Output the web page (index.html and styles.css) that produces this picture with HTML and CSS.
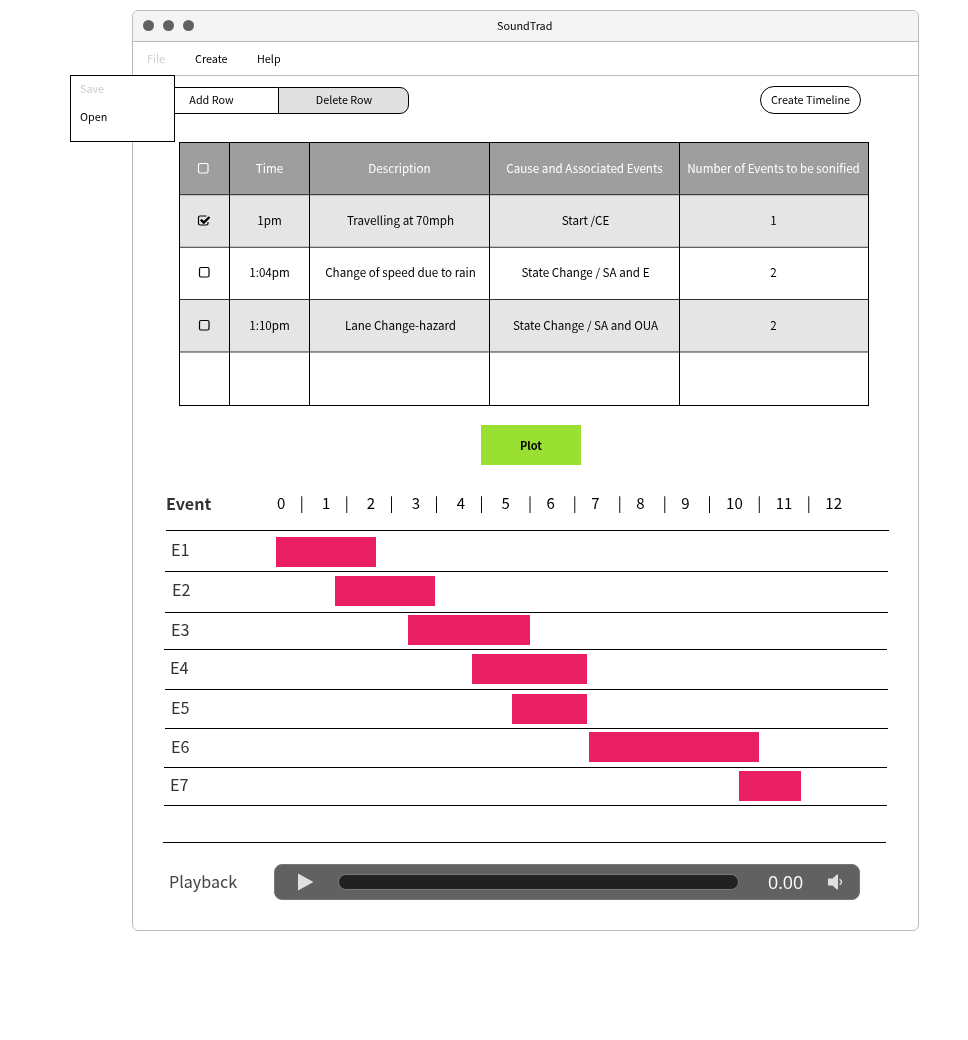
FILE: index.html
```html
<!DOCTYPE html>
<html lang="en">
<head>
<meta charset="utf-8">
<title>SoundTrad</title>
<link rel="stylesheet" href="styles.css">
</head>
<body>
<main class="window">
  <header class="titlebar">
    <span class="dot"></span><span class="dot"></span><span class="dot"></span>
    <h1 class="title">SoundTrad</h1>
  </header>
  <nav class="menubar">
    <span class="menu menu-file">File</span>
    <span class="menu menu-create">Create</span>
    <span class="menu">Help</span>
  </nav>
  <div class="dropdown">
    <div class="option disabled">Save</div>
    <div class="option">Open</div>
  </div>
  <section class="toolbar">
    <div class="group">
      <button class="seg seg-add">Add Row</button>
      <button class="seg seg-delete">Delete Row</button>
    </div>
    <button class="create">Create Timeline</button>
  </section>
  <section class="table">
    <div class="row head">
      <div class="cell pick"><svg class="check" viewBox="0 0 14 14"><rect x="1.5" y="1.5" width="9.500" height="9.500" rx="1.5"/></svg></div>
      <div class="cell">Time</div><div class="cell">Description</div><div class="cell cause">Cause and Associated Events</div><div class="cell count">Number of Events to be sonified</div>
    </div>
    <div class="row r1 shaded">
      <div class="cell pick"><svg class="check" viewBox="0 0 14 14"><path d="M11 8v1.500q0 1.500-1.500 1.500H3q-1.500 0-1.500-1.500V3.500Q1.500 2 3 2h6.500"/><path class="tick" d="M3.800 5.600l3 3L12.500 3"/></svg></div>
      <div class="cell">1pm</div><div class="cell desc">Travelling at 70mph</div><div class="cell cause">Start /CE</div><div class="cell count">1</div>
    </div>
    <div class="row r2">
      <div class="cell pick box"><svg class="check" viewBox="0 0 14 14"><rect x="1.5" y="1.5" width="9.500" height="9.500" rx="1.5"/></svg></div>
      <div class="cell">1:04pm</div><div class="cell desc">Change of speed due to rain</div><div class="cell cause">State Change / SA and E</div><div class="cell count">2</div>
    </div>
    <div class="row r3 shaded">
      <div class="cell pick box"><svg class="check" viewBox="0 0 14 14"><rect x="1.5" y="1.5" width="9.500" height="9.500" rx="1.5"/></svg></div>
      <div class="cell">1:10pm</div><div class="cell desc">Lane Change-hazard</div><div class="cell cause">State Change / SA and OUA</div><div class="cell count">2</div>
    </div>
    <div class="row r4"><div class="cell"></div><div class="cell"></div><div class="cell"></div><div class="cell"></div><div class="cell"></div></div>
  </section>
  <button class="plot">Plot</button>
  <section class="timeline">
    <div class="scale">
      <h2 class="scale-title">Event</h2>
      <div class="ticks">0    |     1    |     2    |     3    |     4    |     5     |    6     |    7     |    8     |    9     |    10    |    11    |    12</div>
    </div>
    <div class="lane e1"><span class="name">E1</span><span class="bar"></span></div>
    <div class="lane e2"><span class="name">E2</span><span class="bar"></span></div>
    <div class="lane e3"><span class="name">E3</span><span class="bar"></span></div>
    <div class="lane e4"><span class="name">E4</span><span class="bar"></span></div>
    <div class="lane e5"><span class="name">E5</span><span class="bar"></span></div>
    <div class="lane e6"><span class="name">E6</span><span class="bar"></span></div>
    <div class="lane e7"><span class="name">E7</span><span class="bar"></span></div>
    <div class="lane e8"></div>
  </section>
  <section class="playback">
    <span class="play-label">Playback</span>
    <div class="player">
      <svg class="play" viewBox="0 0 16 18"><path d="M0 .5v17L15.500 9z"/></svg>
      <div class="track"></div>
      <span class="time">0.00</span>
      <svg class="speaker" viewBox="0 0 16 16"><path d="M0 4.500h4.500L9 .5h1v15H9L4.500 11.500H0z"/><path class="wave" d="M11.500 5.500q2 .5 2 2.500t-2 2.500"/></svg>
    </div>
  </section>
</main>
</body>
</html>
```
FILE: styles.css
```css
* { box-sizing: border-box; }
body {
  margin: 0;
  padding: 10px 0 0 132px;
  background: #fff;
  color: #000;
  font-family: "Noto Sans CJK SC", sans-serif;
  font-size: 10.8px;
  line-height: 16px;
}
button { font: inherit; color: inherit; padding: 0 0 2px; margin: 0; border: 1px solid #000; background: #fff; }
h1, h2 { margin: 0; }

.window {
  position: relative;
  width: 787px;
  height: 921px;
  border: 1px solid #bbb;
  border-radius: 6px;
  will-change: transform;
}
.titlebar {
  display: flex;
  align-items: center;
  height: 31px;
  padding: 0 0 2px 10px;
  gap: 9px;
  background: #f4f4f4;
  border-bottom: 1px solid #bbb;
  border-radius: 5px 5px 0 0;
}
.dot { width: 11px; height: 11px; border-radius: 50%; background: #616161; }
.title { margin-left: 294px; font-size: 10.8px; font-weight: 400; }
.menubar {
  display: flex;
  align-items: center;
  height: 34px;
  padding: 0 0 2px 14px;
  border-bottom: 1px solid #bbb;
}
.menu-file { width: 48px; color: #ccc; }
.menu-create { width: 62px; }

.dropdown {
  position: absolute;
  left: -63px;
  top: 64px;
  width: 105px;
  height: 67px;
  padding: 4px 9px;
  border: 1px solid #000;
  background: #fff;
}
.option { height: 28px; }
.disabled { color: #ccc; }

.toolbar { display: flex; justify-content: space-between; align-items: center; height: 28px; margin: 10px 57px 0 10px; }
.group { display: flex; height: 27px; }
.seg { width: 135px; border-radius: 9px 0 0 9px; }
.seg-add { padding-left: 1px; border-right: 0; }
.seg-delete { width: 131px; padding-left: 1px; border-radius: 0 9px 9px 0; background: #e0e0e0; }
.create { width: 101px; height: 28px; border-radius: 14px; }

.table { width: 690px; height: 264px; margin: 28px 0 0 46px; border: 1px solid #000; border-left: 0; font-size: 11.65px; }
.row { display: grid; grid-template-columns: 50px 80px 180px 190px 189px; height: 52px; }
.head { height: 51px; background: #9e9e9e; color: #fff; }
.cell { display: flex; align-items: center; justify-content: center; padding-bottom: 2px; border-left: 1px solid #000; white-space: nowrap; }
.shaded { background: #e5e5e5; }
.r1 { height: 53px; background-image: linear-gradient(#404040 1px, #c0c0c0 1px 2px, transparent 2px calc(100% - 1px), #c0c0c0 calc(100% - 1px)); }
.r2 { background-image: linear-gradient(#606060 1px, transparent 1px); }
.r3 { background-image: linear-gradient(#303030 1px, transparent 1px); }
.r3 .cell { padding-bottom: 0; }
.r4 { height: 54px; background-image: linear-gradient(#888 1px, #9e9e9e 1px 2px, transparent 2px); }
.desc { padding-left: 2px; }
.cause { padding-left: 2px; }
.count { padding-right: 1px; }
.head .cause { padding-left: 0; }
.pick { padding: 0 2px 0 0; }
.box { padding: 0 0 0 1px; }
.r3 .box { padding-top: 2px; }
.check { width: 14px; height: 14px; fill: none; stroke: currentColor; stroke-width: 1.2; }
.tick { stroke-width: 2.4; }

.plot { display: block; width: 100px; height: 40px; margin: 19px 0 0 348px; padding-bottom: 0; border: 0; background: #99e033; font-size: 11px; font-weight: 700; }

.timeline { margin-left: 30px; color: #333; }
.scale { display: flex; height: 66px; width: 723px; margin-left: 3px; padding-top: 26px; border-bottom: 1px solid #000; }
.scale-title { width: 111px; font-size: 16.1px; line-height: 24px; }
.ticks { font-size: 15px; line-height: 24px; word-spacing: 0.255px; color: #000; white-space: pre; }
.lane { display: flex; width: 723px; margin-left: 2px; border-bottom: 1px solid #000; }
.name { width: 111px; padding-left: 6px; font-size: 16.3px; line-height: 35px; }
.bar { height: 30px; background: #e91e63; }
.e1 { height: 41px; }
.e1 .name { line-height: 36px; }
.e1 .bar { width: 100px; margin-top: 6px; }
.e2 { height: 41px; }
.e2 .name { padding-left: 7px; line-height: 34px; }
.e2 .bar { width: 100px; margin: 4px 0 0 59px; }
.e3 { height: 37px; margin-left: 1px; }
.e3 .name { padding-left: 7px; line-height: 33px; }
.e3 .bar { width: 122px; margin: 2px 0 0 133px; }
.e4 { height: 40px; }
.e4 .name { padding-left: 5px; }
.e4 .bar { width: 115px; margin: 4px 0 0 196px; }
.e5 { height: 39px; }
.e5 .name { line-height: 34px; }
.e5 .bar { width: 75px; margin: 4px 0 0 236px; }
.e6 { height: 39px; margin-left: 1px; }
.e6 .name { padding-left: 7px; line-height: 34px; }
.e6 .bar { width: 170px; margin: 3px 0 0 314px; }
.e7 { height: 38px; margin-left: 1px; }
.e7 .name { line-height: 33px; }
.e7 .bar { width: 62px; margin: 3px 0 0 464px; }
.e8 { height: 37px; margin-left: 0; }

.playback { display: flex; margin: 21px 0 0 36px; color: #444; }
.play-label { width: 105px; font-size: 16.1px; line-height: 34px; }
.player {
  display: flex;
  align-items: center;
  width: 586px;
  height: 36px;
  padding-left: 23px;
  border: 1px solid #777;
  border-radius: 8px;
  background: #616161;
}
.play { width: 16px; height: 18px; fill: #e0e0e0; }
.track { width: 401px; height: 16px; margin-left: 24px; border: 1px solid #7a7a7a; border-radius: 8px; background: #212121; }
.time { width: 60px; margin-left: 29px; color: #fff; font: 17.8px/24px "Open Sans", sans-serif; }
.speaker { width: 16px; height: 16px; fill: #e0e0e0; }
.wave { fill: none; stroke: #e0e0e0; stroke-width: 1.5; }
```
